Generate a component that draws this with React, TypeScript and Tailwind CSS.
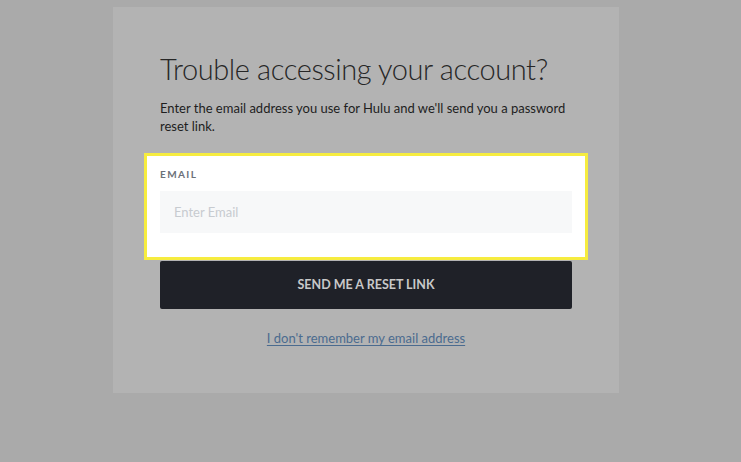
import React from 'react';

const App: React.FC = () => {
  return (
    <div className="min-h-screen bg-[#aaaaaa] pt-[7px] font-['Lato',sans-serif]">
      <div className="ml-[113px] h-[386px] w-[506px] bg-[#b3b3b3] px-[47px] pt-[44px]">
        {/* Heading */}
        <h1 className="whitespace-nowrap text-[29px] font-light leading-[36px] tracking-[-0.4px] text-[#262626]">
          Trouble accessing your account?
        </h1>
        <p className="mt-[13px] text-[13px] leading-[17.5px] text-[#1e1e1e]">
          Enter the email address you use for Hulu and we'll send you a password reset link.
        </p>

        {/* Highlighted email field */}
        <div className="-mx-4 mt-[18px] border-[3px] border-[#f6ec3f] bg-white px-[13px] pb-[24px] pt-[11px]">
          <label className="block text-[10px] font-bold leading-[14px] tracking-[1.4px] text-[#6b7079]">
            EMAIL
          </label>
          <input
            className="mt-[10px] block h-[42px] w-full bg-[#f7f8f9] px-[14px] text-[13px] outline-none placeholder:text-[#c7cbd0]"
            placeholder="Enter Email"
          />
        </div>

        <button className="mt-[1px] h-[48px] w-full rounded-[2px] bg-[#1f2128] text-[12.5px] font-bold text-[#c8c8c8]">
          SEND ME A RESET LINK
        </button>

        <div className="mt-[16px] text-center">
          <a href="#" className="text-[13px] text-[#4b6b8f] underline underline-offset-2">
            I don't remember my email address
          </a>
        </div>
      </div>
    </div>
  );
};

export default App;
